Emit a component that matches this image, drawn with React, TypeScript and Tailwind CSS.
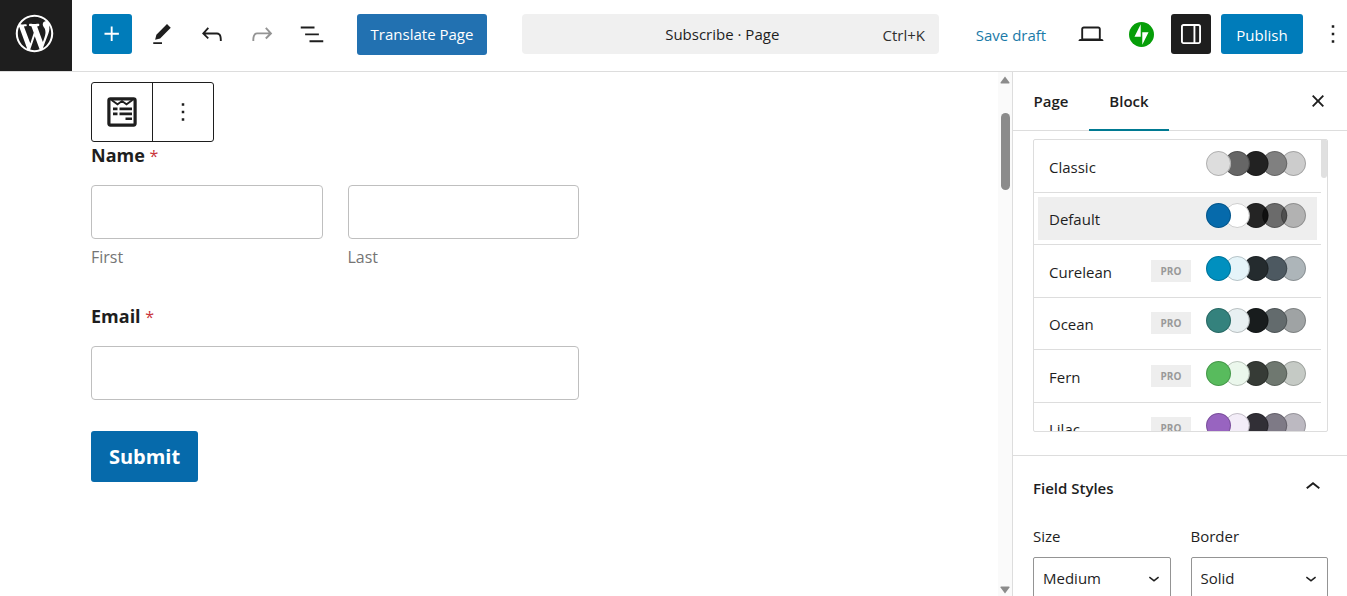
import React, { useState } from 'react';

const icons = {
  plus: 'M11 12.5V17.5H12.5V12.5H17.5V11H12.5V6H11V11H6V12.5H11Z',
  pencil: 'm19 7-3-3-8.5 8.5-1 4 4-1L19 7Zm-7 11.5H5V20h7v-1.5Z',
  undo: 'M18.3 11.7c-.6-.6-1.4-.9-2.3-.9H6.7l2.9-3.3-1.1-1-4.5 5L8.5 16l1-1-2.7-2.7H16c.5 0 .9.2 1.3.5 1 1 1 3.4 1 4.5v.3h1.5v-.2c0-1.5 0-4.3-1.5-5.7z',
  redo: 'M15.6 6.5l-1.1 1 2.9 3.3H8c-.9 0-1.7.3-2.3.9-1.4 1.5-1.4 4.2-1.4 5.6v.2h1.5v-.3c0-1.1 0-3.5 1-4.5.3-.3.7-.5 1.3-.5h9.2L14.5 15l1.1 1.1 4.6-4.6-4.6-5z',
  listView: 'M3 6h11v1.5H3V6Zm3.5 5.5h11V13h-11v-1.5ZM21 17H10v1.5h11V17Z',
  desktop: 'M20.5 16h-.7V8c0-1.1-.9-2-2-2H6.2c-1.1 0-2 .9-2 2v8h-.7c-.8 0-1.5.7-1.5 1.5h20c0-.8-.7-1.5-1.5-1.5zM5.7 8c0-.3.2-.5.5-.5h11.6c.3 0 .5.2.5.5v7.6H5.7V8z',
  drawer: 'M18 4H6c-1.1 0-2 .9-2 2v12c0 1.1.9 2 2 2h12c1.1 0 2-.9 2-2V6c0-1.1-.9-2-2-2zm-4 14.5H6c-.3 0-.5-.2-.5-.5V6c0-.3.2-.5.5-.5h8v13zm4.5-.5c0 .3-.2.5-.5.5h-2.5v-13H18c.3 0 .5.2.5.5v12z',
  more: 'M13 19h-2v-2h2v2zm0-6h-2v-2h2v2zm0-6h-2V5h2v2z',
  close: 'M12 13.06l3.712 3.713 1.061-1.06L13.061 12l3.712-3.712-1.06-1.06L12 10.938 8.288 7.227l-1.061 1.06L10.939 12l-3.712 3.712 1.06 1.061L12 13.061z',
  chevronUp: 'M6.5 12.4L12 8l5.5 4.4-.9 1.2L12 10l-4.5 3.6-1-1.2z',
  chevronDown: 'M17.5 11.6L12 16l-5.5-4.4.9-1.2L12 14l4.5-3.6 1 1.2z',
};

interface IconProps {
  name: keyof typeof icons;
  className?: string;
}

const Icon: React.FC<IconProps> = ({ name, className = 'size-[30px]' }) => (
  <svg viewBox="0 0 24 24" fill="currentColor" aria-hidden="true" className={`shrink-0 ${className}`}>
    <path d={icons[name]} />
  </svg>
);

const WordPressLogo = () => (
  <svg viewBox="-2 -2 24 24" fill="currentColor" aria-hidden="true" className="size-[45px]">
    <path d="M20 10c0-5.51-4.49-10-10-10C4.48 0 0 4.49 0 10c0 5.52 4.48 10 10 10 5.51 0 10-4.48 10-10zM7.78 15.37L4.37 6.22c.55-.02 1.17-.08 1.17-.08.5-.06.44-1.13-.06-1.11 0 0-1.45.11-2.37.11-.18 0-.37 0-.58-.01C4.12 2.69 6.87 1.11 10 1.11c2.33 0 4.45.87 6.05 2.34-.68-.11-1.65.39-1.65 1.58 0 .74.45 1.36.9 2.1.35.61.55 1.36.55 2.46 0 1.49-1.4 5-1.4 5l-3.03-8.37c.54-.02.82-.17.82-.17.5-.05.44-1.25-.06-1.22 0 0-1.44.12-2.38.12-.87 0-2.33-.12-2.33-.12-.5-.03-.56 1.2-.06 1.22l.92.08 1.26 3.41zM17.41 10c.24-.64.74-1.87.43-4.25.7 1.29 1.05 2.71 1.05 4.25 0 3.29-1.73 6.24-4.4 7.78.97-2.59 1.94-5.2 2.92-7.78zM6.1 18.09C3.12 16.65 1.11 13.53 1.11 10c0-1.3.23-2.48.72-3.59C3.25 10.3 4.67 14.2 6.1 18.09zm4.03-6.63l2.58 6.98c-.86.29-1.76.45-2.71.45-.79 0-1.57-.11-2.29-.33.81-2.38 1.62-4.74 2.42-7.1z" />
  </svg>
);

const JetpackLogo = () => (
  <svg viewBox="0 0 32 32" aria-hidden="true" className="size-[25px]">
    <circle cx="16" cy="16" r="16" fill="#069e08" />
    <path fill="#fff" d="M15 19H7l8-16zM17 29V13h8z" />
  </svg>
);

const FormIcon = () => (
  <svg viewBox="0 0 30 30" aria-hidden="true" className="size-[30px]">
    <rect x="1.9" y="1.9" width="26.2" height="26.2" rx="1.5" fill="none" stroke="#1e1e1e" strokeWidth="3.2" />
    <path d="M4.5 3l6 4.3L15 4l4.5 3.3 6-4.3" fill="none" stroke="#1e1e1e" strokeWidth="1.8" />
    <path d="M6 10.6h4.5v2.6H6zM12.5 10.6H25v2.6H12.5zM6 15.6h4.5v2.6H6zM12.5 15.6H25v2.6H12.5zM18.5 20.4H25V23h-6.5z" fill="#1e1e1e" />
  </svg>
);

interface ToolButtonProps extends IconProps {
  label: string;
  style?: string;
}

const ToolButton: React.FC<ToolButtonProps> = ({ name, label, style = '' }) => (
  <button aria-label={label} className={`flex size-10 shrink-0 items-center justify-center rounded-[3px] ${style}`}>
    <Icon name={name} />
  </button>
);

const themes = [
  { name: 'Classic', pro: false, colors: ['#dddddd', '#666666', '#222222', '#808080', '#cccccc'] },
  { name: 'Default', pro: false, colors: ['#066aab', '#ffffff', 'rgba(0,0,0,0.85)', 'rgba(0,0,0,0.55)', 'rgba(0,0,0,0.25)'] },
  { name: 'Curelean', pro: true, colors: ['#0090bf', '#e5f4f9', '#242b2e', '#4d5961', '#adb5b9'] },
  { name: 'Ocean', pro: true, colors: ['#34827d', '#e8f0f2', '#181c1d', '#636b6d', '#9fa3a4'] },
  { name: 'Fern', pro: true, colors: ['#58bb5d', '#ebf7ec', '#363b36', '#6f7870', '#c5cac5'] },
  { name: 'Lilac', pro: true, colors: ['#9864c0', '#f3edf8', '#312f36', '#7e7a86', '#bcb9c1'] },
];

const Swatches: React.FC<{ colors: string[] }> = ({ colors }) => (
  <svg viewBox="0 0 101 25" aria-hidden="true" className="mb-[5px] h-[25px] w-[101px] shrink-0">
    {colors
      .map((color, i) => (
        <g key={i}>
          <circle cx={12.5 + i * 18.75} cy="12.5" r="12.5" fill={color} />
          <circle cx={12.5 + i * 18.75} cy="12.5" r="12" fill="none" stroke="#000" strokeOpacity="0.2" />
        </g>
      ))
      .reverse()}
  </svg>
);

const Header = () => (
  <header className="flex h-[72px] shrink-0 items-stretch overflow-hidden border-b border-[#ddd]">
    <a href="#" aria-label="View Pages" className="flex w-[72px] shrink-0 items-center justify-center bg-[#1e1e1e] pr-[3px] pb-1 text-white">
      <WordPressLogo />
    </a>
    <div className="flex flex-1 items-center pb-[3px] pl-5">
      <div className="flex gap-2.5">
        <ToolButton name="plus" label="Toggle block inserter" style="bg-[#007cba] text-white" />
        <ToolButton name="pencil" label="Tools" />
        <ToolButton name="undo" label="Undo" />
        <ToolButton name="redo" label="Redo" style="text-[#949494]" />
        <ToolButton name="listView" label="Document overview" />
      </div>
      <button className="ml-[25px] h-[41px] w-[130px] shrink-0 rounded-[3px] bg-[#2271b1] whitespace-nowrap text-white">
        Translate Page
      </button>
      <button className="ml-[35px] flex h-10 min-w-0 flex-1 items-center rounded-[4px] bg-[#f0f0f0] pr-3.5 pl-10 whitespace-nowrap">
        <span className="flex-1 text-center">Subscribe · Page</span>
        <span className="pt-0.5 text-[#2f2f2f]">Ctrl+K</span>
      </button>
      <button className="ml-[35px] w-[74px] shrink-0 pt-0.5 whitespace-nowrap text-[#1a7aa8]">Save draft</button>
      <div className="ml-[23px] flex gap-2.5">
        <ToolButton name="desktop" label="View" />
        <button aria-label="Jetpack" className="flex size-10 shrink-0 items-center justify-center">
          <JetpackLogo />
        </button>
        <ToolButton name="drawer" label="Settings" style="bg-[#1e1e1e] text-white" />
        <button className="h-10 w-[82px] rounded-[3px] bg-[#007cba] pt-0.5 text-white">Publish</button>
        <ToolButton name="more" label="Options" style="-mr-1.5" />
      </div>
    </div>
  </header>
);

const Required = () => <span className="text-base font-normal text-[#c9353b]">*</span>;

const labelClass = 'block pt-px text-lg leading-6 font-bold text-[#1e1e1e]';
const inputClass = 'block h-[54px] w-full rounded-[4px] border border-[#bfbfbf] bg-white px-3';

const Canvas = () => (
  <main className="flex min-w-0 flex-1">
    <div className="min-w-0 flex-1 pt-2.5 pl-[91px]">
      <div className="flex h-[60px] w-[123px] rounded-[3px] border border-[#1e1e1e]">
        <button aria-label="WPForms" className="flex flex-1 items-center justify-center border-r border-[#1e1e1e]">
          <FormIcon />
        </button>
        <button aria-label="Options" className="flex flex-1 items-center justify-center">
          <Icon name="more" />
        </button>
      </div>
      <form className="max-w-[488px]" onSubmit={(e) => e.preventDefault()}>
        <fieldset>
          <legend className={labelClass}>
            Name <Required />
          </legend>
          <div className="mt-[17px] grid grid-cols-2 gap-[25px]">
            <div>
              <input id="first" type="text" className={inputClass} />
              <label htmlFor="first" className="mt-1.5 block text-base leading-6 text-[#757575]">First</label>
            </div>
            <div>
              <input id="last" type="text" className={inputClass} />
              <label htmlFor="last" className="mt-1.5 block text-base leading-6 text-[#757575]">Last</label>
            </div>
          </div>
        </fieldset>
        <label htmlFor="email" className={`mt-[34px] ${labelClass}`}>
          Email <Required />
        </label>
        <input id="email" type="email" className={`mt-[17px] ${inputClass}`} />
        <button type="submit" className="mt-[31px] h-[51px] w-[107px] rounded-[3px] bg-[#066aab] pt-px text-xl font-bold text-white">
          Submit
        </button>
      </form>
    </div>
    {/* scrollbar */}
    <div className="flex w-[14px] flex-col items-center bg-[#fafafa] pt-1 pb-0.5">
      <svg viewBox="0 0 10 8" className="h-2 w-2.5" fill="#8b8b8b" aria-hidden="true">
        <path d="M5 0.5L9.5 6.5Q9.5 7.5 9 7.5H1Q.5 7.5.5 6.5z" />
      </svg>
      <div className="mt-[29px] h-[77px] w-[9px] rounded-full bg-[#8b8b8b]" />
      <svg viewBox="0 0 10 8" className="mt-auto h-2 w-2.5" fill="#8b8b8b" aria-hidden="true">
        <path d="M5 7.5L9.5 1.5Q9.5.5 9 .5H1Q.5.5.5 1.5z" />
      </svg>
    </div>
  </main>
);

interface SelectFieldProps {
  id: string;
  label: string;
  options: string[];
}

const SelectField: React.FC<SelectFieldProps> = ({ id, label, options }) => (
  <div>
    <label htmlFor={id} className="block leading-6">{label}</label>
    <div className="relative mt-[9px]">
      <select id={id} className="h-[42px] w-full appearance-none rounded-[2px] border border-[#949494] bg-white px-[9px]">
        {options.map((option) => (
          <option key={option}>{option}</option>
        ))}
      </select>
      <Icon name="chevronDown" className="pointer-events-none absolute top-2.5 right-1.5 size-[22px]" />
    </div>
  </div>
);

const Sidebar = () => {
  const [selected, setSelected] = useState('Default');

  return (
    <aside className="flex w-[335px] shrink-0 flex-col border-l border-[#ddd]">
      <div className="flex h-[59px] shrink-0 items-stretch border-b border-[#ddd] font-semibold">
        <button className="w-[76px] text-center">Page</button>
        <button className="-mb-px w-20 border-b-2 border-[#007a92] pt-0.5 text-center">Block</button>
        <button aria-label="Close Settings" className="mr-3.5 ml-auto">
          <Icon name="close" />
        </button>
      </div>
      <div className="border-b border-[#ddd] pt-2 pr-[19px] pb-[23px] pl-5">
        <div className="flex h-[293px] overflow-hidden rounded-[2px] border border-[#ddd]">
          <ul className="flex h-[315px] flex-1 flex-col">
            {themes.map((theme) => (
              <li key={theme.name} className="flex flex-1 border-b border-[#ddd] p-1">
                <button
                  onClick={() => setSelected(theme.name)}
                  className={`flex flex-1 items-center pr-2.5 pl-[11px] ${selected === theme.name ? 'bg-[#eee]' : ''}`}
                >
                  <span className="flex-1 pt-0.5 text-left">{theme.name}</span>
                  {theme.pro && (
                    <span className="mr-[15px] h-[22px] w-10 bg-[#eee] text-[10px] leading-[22px] font-bold text-[#999]">PRO</span>
                  )}
                  <Swatches colors={theme.colors} />
                </button>
              </li>
            ))}
          </ul>
          <div className="h-[38px] w-1.5 rounded-b-full bg-[#e0e0e0]" />
        </div>
      </div>
      <div className="pt-4 pr-[19px] pl-5">
        <button className="flex w-full items-center justify-between font-semibold">
          <span className="pt-0.5 leading-6">Field Styles</span>
          <Icon name="chevronUp" />
        </button>
        <div className="mt-[22px] grid grid-cols-2 gap-5">
          <SelectField id="size" label="Size" options={['Medium', 'Small', 'Large']} />
          <SelectField id="border" label="Border" options={['Solid', 'None', 'Dashed', 'Dotted']} />
        </div>
      </div>
    </aside>
  );
};

const App: React.FC = () => {
  return (
    <div className="flex h-screen flex-col overflow-hidden bg-white font-['Open_Sans','Noto_Sans',sans-serif] text-[15px] text-[#1e1e1e]">
      <Header />
      <div className="flex min-h-0 flex-1">
        <Canvas />
        <Sidebar />
      </div>
    </div>
  );
};

export default App;
